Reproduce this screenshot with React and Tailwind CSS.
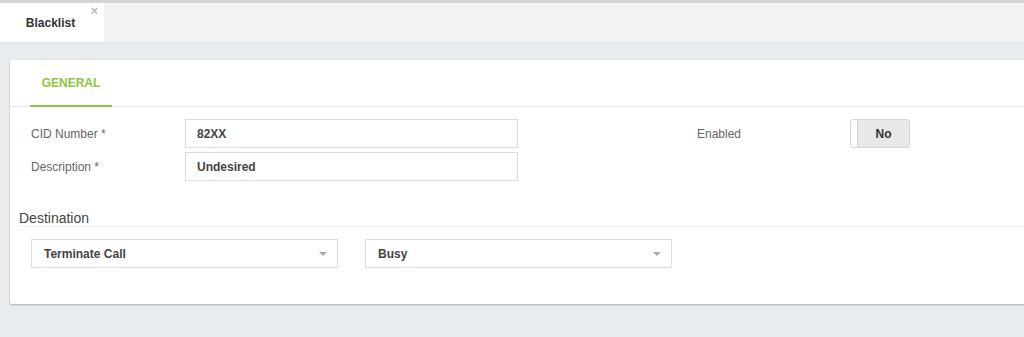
import React from 'react';

// Campo de texto con etiqueta a la izquierda
const Field = ({ label, value }) => (
  <div className="flex items-center h-[33px]">
    <label className="w-[154px] text-[12px] text-[#666]">{label}</label>
    <div className="w-[333px] h-[29px] border border-[#dcdcdc] bg-white flex items-center px-[11px]">
      <span className="text-[12px] font-bold text-[#444]">{value}</span>
    </div>
  </div>
);

const SelectBox = ({ value }) => (
  <div className="w-[307px] h-[29px] border border-[#dcdcdc] bg-white flex items-center justify-between pl-[12px] pr-[10px]">
    <span className="text-[12px] font-bold text-[#444]">{value}</span>
    <span className="w-0 h-0 border-l-[4px] border-r-[4px] border-t-[4px] border-l-transparent border-r-transparent border-t-[#aaa]" />
  </div>
);

const App = () => {
  return (
    <div
      className="w-[1024px] h-[337px] bg-[#e9ecef] overflow-hidden"
      style={{ fontFamily: '"Liberation Sans", Arial, sans-serif' }}
    >
      {/* Barra de pestañas */}
      <div className="h-[43px] bg-[#f3f3f3] border-t-[3px] border-t-[#d4d4d4] border-b border-b-[#dfe3e7] flex">
        <div className="relative w-[104px] h-full bg-white flex items-center justify-center">
          <span className="text-[12px] font-bold text-[#333] -ml-[3px]">Blacklist</span>
          <span className="absolute right-[6px] top-[1px] text-[13px] leading-none text-[#bbb] font-bold">×</span>
        </div>
      </div>

      {/* Tarjeta */}
      <div className="mt-[17px] ml-[10px] w-[1030px] h-[244px] bg-white rounded-[2px] shadow-[0_1px_2px_rgba(0,0,0,0.25)]">
        <div className="h-[47px] border-b border-[#e5e5e5] flex items-end pl-[20px]">
          <div className="w-[82px] h-[46px] border-b-2 border-[#8dc63f] -mb-px flex items-center justify-center">
            <span className="text-[12px] font-bold text-[#8dc63f]">GENERAL</span>
          </div>
        </div>

        <div className="flex pt-[10px] pl-[21px]">
          <div className="flex flex-col">
            <Field label="CID Number *" value="82XX" />
            <Field label="Description *" value="Undesired" />
          </div>
          <div className="flex items-start ml-[179px] h-[33px]">
            <div className="flex items-center h-[33px]">
              <label className="w-[153px] text-[12px] text-[#666]">Enabled</label>
              <div className="w-[60px] h-[29px] rounded-[3px] border border-[#d6d6d6] bg-[#e8e8e8] flex">
                <div className="w-[7px] h-full bg-white rounded-l-[3px] border-r border-[#d6d6d6]" />
                <div className="flex-1 flex items-center justify-center">
                  <span className="text-[12px] font-bold text-[#333]">No</span>
                </div>
              </div>
            </div>
          </div>
        </div>

        <div className="mt-[28px] ml-[9px] border-b border-[#eeeeee] pb-[1px]">
          <span className="block text-[14px] leading-[14px] text-[#444]">Destination</span>
        </div>

        <div className="flex gap-[27px] mt-[12px] ml-[21px]">
          <SelectBox value="Terminate Call" />
          <SelectBox value="Busy" />
        </div>
      </div>
    </div>
  );
};

export default App;
